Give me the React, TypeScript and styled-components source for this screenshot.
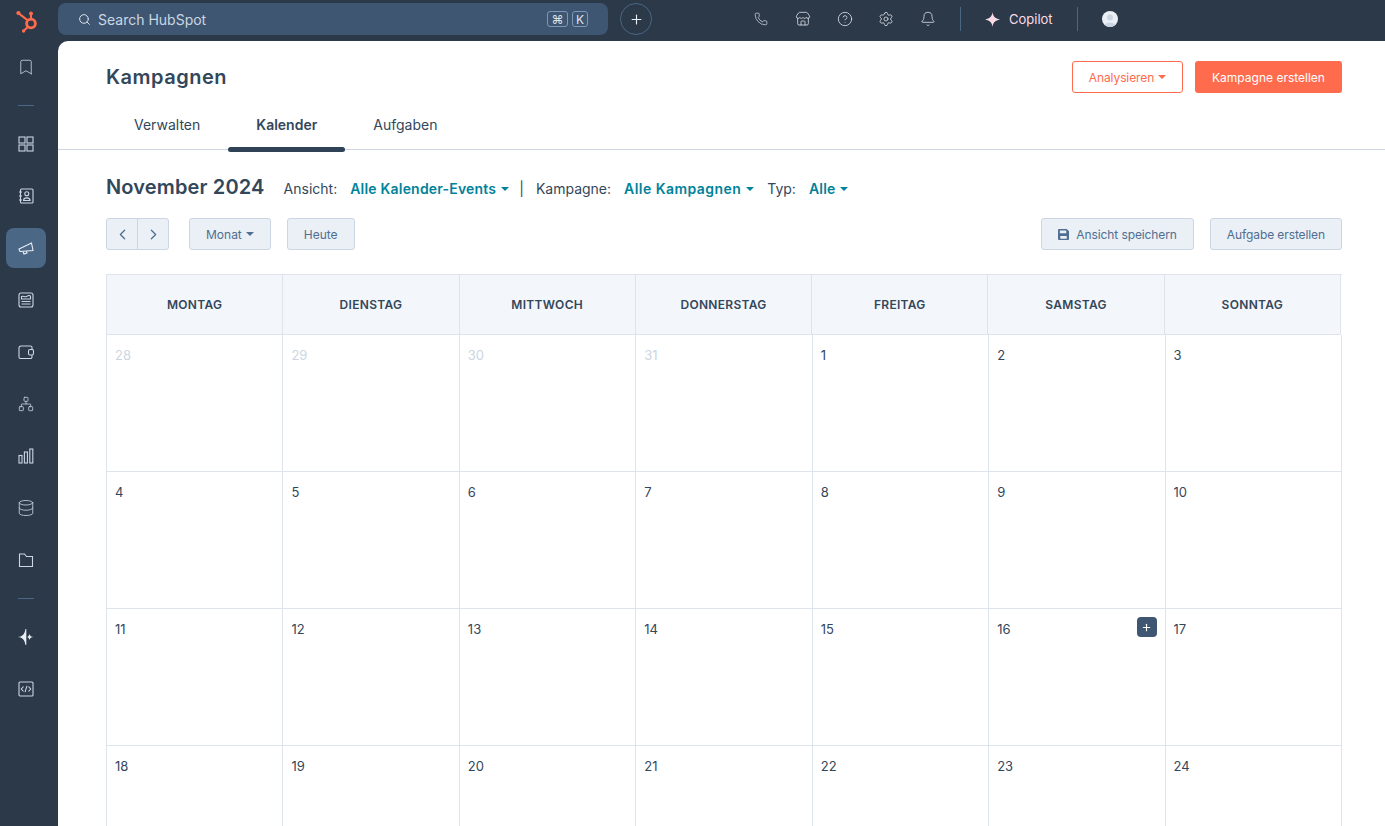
import React from 'react';
import styled, { createGlobalStyle } from 'styled-components';
import {
  Bell, Bookmark, ChevronLeft, ChevronRight, CircleHelp, Database,
  Network, Phone, Plus, Search, Settings, Store,
} from 'lucide-react';

const DAYS = ['MONTAG', 'DIENSTAG', 'MITTWOCH', 'DONNERSTAG', 'FREITAG', 'SAMSTAG', 'SONNTAG'];
const CELLS = [
  [28, true], [29, true], [30, true], [31, true], [1], [2], [3],
  [4], [5], [6], [7], [8], [9], [10],
  [11], [12], [13], [14], [15], [16], [17],
  [18], [19], [20], [21], [22], [23], [24],
] as [number, boolean?][];

function HubSpotLogo() {
  return (
    <svg width="26" height="26" viewBox="0 0 26 26" fill="none" stroke="#ff6b4d">
      <circle cx="17" cy="15.5" r="4.4" strokeWidth="2.8" />
      <path d="M17 11V6.5" strokeWidth="2" />
      <circle cx="17" cy="5.4" r="2" fill="#ff6b4d" stroke="none" />
      <path d="M13.8 12.4 5 5.6" strokeWidth="2" />
      <circle cx="4.4" cy="5" r="2.1" fill="#ff6b4d" stroke="none" />
      <path d="M13.8 19 10 22.6" strokeWidth="2" />
      <circle cx="9.6" cy="23" r="1.7" fill="#ff6b4d" stroke="none" />
    </svg>
  );
}

function Sparkle({ color, size }: { color: string; size: number }) {
  return (
    <svg width={size} height={size} viewBox="0 0 16 16" fill={color}>
      <path d="M8 0C8.500 4.600 10.600 7 16 8 10.600 9 8.500 11.400 8 16 7.500 11.400 5.400 9 0 8 5.400 7 7.500 4.600 8 0Z" />
    </svg>
  );
}

function Line({ children, size = 16 }: { children: React.ReactNode; size?: number }) {
  return (
    <svg width={size} height={size} viewBox="0 0 16 16" fill="none" stroke="currentColor" strokeWidth="1.1">
      {children}
    </svg>
  );
}

const GridIcon = () => (
  <Line>
    <rect x="1" y="1" width="6" height="6" />
    <rect x="9" y="1" width="6" height="6" />
    <rect x="1" y="9" width="6" height="6" />
    <rect x="9" y="9" width="6" height="6" />
  </Line>
);
const ContactsIcon = () => (
  <Line>
    <rect x="2.500" y="1" width="12.500" height="14" rx="1" />
    <path d="M1 4H4M1 8H4M1 12H4" />
    <circle cx="8.800" cy="5.800" r="2" />
    <path d="M5.500 12.500C5.800 9 11.800 9 12.100 12.500Z" />
  </Line>
);
const MegaphoneIcon = () => (
  <Line>
    <path d="M1 9 13.500 3 15 10.500 2 11.500Z" />
    <path d="M5 11.500 6 14 9 13 8.300 11.200" />
  </Line>
);
const ContentIcon = () => (
  <Line>
    <rect x="1" y="1" width="14" height="14" rx="2" />
    <path d="M3.500 7V4.500C6 3.500 6.500 5.500 8.500 4.500S12 3 12.500 4.500V7ZM3.500 9.500H12.500M3.500 12H12.500" />
  </Line>
);
const WalletIcon = () => (
  <Line>
    <path d="M14 5.500V3.500A1.500 1.500 0 0 0 12.500 2H3A2 2 0 0 0 1 4V13A1.500 1.500 0 0 0 2.500 14.500H12.500A1.500 1.500 0 0 0 14 13V11" />
    <rect x="10.500" y="5.500" width="5" height="5.500" rx="1.500" />
  </Line>
);
const BarsIcon = () => (
  <Line>
    <rect x="1" y="7.500" width="3" height="7.500" />
    <rect x="6.400" y="4" width="3" height="11" />
    <rect x="11.800" y="1" width="3" height="14" />
  </Line>
);
const FolderIcon = () => (
  <Line>
    <path d="M1.500 14.500V2H6.500L8.500 4.500H14.500V14.500Z" />
  </Line>
);
const AiIcon = () => (
  <svg width="16" height="16" viewBox="0 0 16 16" fill="#eaf0f6">
    <path d="M0 8C4 7.500 6.500 6 7.500 0H8.300V16H7.500C6.500 10 4 8.500 0 8Z" />
    <path d="M9 8C10 7.700 11 7 11.500 5 12 7 13 7.700 15.500 8 13 8.300 12 9 11.500 11 11 9 10 8.300 9 8Z" />
  </svg>
);
const CodeIcon = () => (
  <Line>
    <rect x="1" y="1" width="14" height="14" rx="1" />
    <path d="M5.500 5.500 3.300 8 5.500 10.500M10.500 5.500 12.700 8 10.500 10.500M9 4.800 7 11.200" />
  </Line>
);
const SaveIcon = () => (
  <svg width="11" height="11" viewBox="0 0 12 12" fill="#506e91">
    <path fillRule="evenodd" d="M1 0H9.500L12 2.500V11A1 1 0 0 1 11 12H1A1 1 0 0 1 0 11V1A1 1 0 0 1 1 0ZM2 1.500V4.500H9V1.500ZM2.500 7.500V10.500H9.500V7.500Z" />
  </svg>
);
const Avatar = () => (
  <svg width="16" height="16" viewBox="0 0 16 16">
    <circle cx="8" cy="8" r="8" fill="#eaf0f6" />
    <circle cx="8" cy="6.500" r="3" fill="#cbd6e2" />
    <path d="M2.800 14C4 10.500 12 10.500 13.200 14 10 16.600 6 16.600 2.800 14Z" fill="#cbd6e2" />
  </svg>
);

export default function App() {
  return (
    <Shell>
      <GlobalStyle />
      <Sidebar>
        <LogoSlot><HubSpotLogo /></LogoSlot>
        <NavItem><Bookmark size={18} strokeWidth={1.1} /></NavItem>
        <NavDivider />
        <NavItem><GridIcon /></NavItem>
        <NavItem><ContactsIcon /></NavItem>
        <NavItem active><MegaphoneIcon /></NavItem>
        <NavItem><ContentIcon /></NavItem>
        <NavItem><WalletIcon /></NavItem>
        <NavItem><Network size={16} strokeWidth={1.2} /></NavItem>
        <NavItem><BarsIcon /></NavItem>
        <NavItem><Database size={18} strokeWidth={1.1} /></NavItem>
        <NavItem><FolderIcon /></NavItem>
        <NavDivider />
        <NavItem><AiIcon /></NavItem>
        <NavItem><CodeIcon /></NavItem>
      </Sidebar>
      <Column>
        <TopBar>
          <SearchBox>
            <Search size={13} strokeWidth={1.8} color="#dfe3eb" />
            <SearchLabel>Search HubSpot</SearchLabel>
            <Keys>
              <Key>⌘</Key>
              <Key>K</Key>
            </Keys>
          </SearchBox>
          <AddButton><Plus size={15} strokeWidth={1.8} /></AddButton>
          <TopIcons>
            <TopIcon><Phone size={14} strokeWidth={1.2} /></TopIcon>
            <TopIcon><Store size={16} strokeWidth={1.2} /></TopIcon>
            <TopIcon><CircleHelp size={16} strokeWidth={1.2} /></TopIcon>
            <TopIcon><Settings size={16} strokeWidth={1.2} /></TopIcon>
            <TopIcon><Bell size={16} strokeWidth={1.2} /></TopIcon>
          </TopIcons>
          <TopSeparator />
          <Copilot>
            <Sparkle color="#fbdbe6" size={15} />
            <span>Copilot</span>
          </Copilot>
          <TopSeparator />
          <AvatarSlot><Avatar /></AvatarSlot>
        </TopBar>
        <Panel>
          <PageHeader>
            <PageTitle>Kampagnen</PageTitle>
            <HeaderActions>
              <OutlineButton>Analysieren<Caret /></OutlineButton>
              <PrimaryButton>Kampagne erstellen</PrimaryButton>
            </HeaderActions>
          </PageHeader>
          <Tabs>
            <Tab>Verwalten</Tab>
            <Tab active>Kalender</Tab>
            <Tab>Aufgaben</Tab>
          </Tabs>
          <Content>
            <FilterRow>
              <MonthTitle>November 2024</MonthTitle>
              <FilterLabel>Ansicht:</FilterLabel>
              <FilterLink>Alle Kalender-Events<Caret /></FilterLink>
              <FilterPipe>|</FilterPipe>
              <FilterLabel>Kampagne:</FilterLabel>
              <FilterLink wide>Alle Kampagnen<Caret /></FilterLink>
              <FilterLabel>Typ:</FilterLabel>
              <FilterLink>Alle<Caret /></FilterLink>
            </FilterRow>
            <Toolbar>
              <ArrowGroup>
                <ArrowButton><ChevronLeft size={17} strokeWidth={1.8} /></ArrowButton>
                <ArrowButton><ChevronRight size={17} strokeWidth={1.8} /></ArrowButton>
              </ArrowGroup>
              <GreyButton>Monat<Caret /></GreyButton>
              <GreyButton>Heute</GreyButton>
              <ToolbarRight>
                <GreyButton><SaveIcon />Ansicht speichern</GreyButton>
                <GreyButton>Aufgabe erstellen</GreyButton>
              </ToolbarRight>
            </Toolbar>
            <Calendar>
              <HeaderRow>
                {DAYS.map(day => <DayHead key={day}>{day}</DayHead>)}
              </HeaderRow>
              <Weeks>
                {CELLS.map(([num, muted]) => (
                  <DayCell key={`${num}-${muted ? 'prev' : 'cur'}`}>
                    <DayNumber muted={muted}>{num}</DayNumber>
                    {num === 16 && !muted && <CellAdd><Plus size={11} strokeWidth={2.4} /></CellAdd>}
                  </DayCell>
                ))}
              </Weeks>
            </Calendar>
          </Content>
        </Panel>
      </Column>
    </Shell>
  );
}

const GlobalStyle = createGlobalStyle`
  html, body {
    margin: 0;
    height: 100%;
    overflow: hidden;
    background: #2b3949;
    font-family: Inter, "Liberation Sans", sans-serif;
    color: #33475b;
  }
`;
const Shell = styled.div`
  display: flex;
  width: 1385px;
  height: 826px;
  overflow: hidden;
  background: #2b3949;
`;
const Sidebar = styled.nav`
  display: flex;
  flex-direction: column;
  gap: 12px;
  flex: 0 0 58px;
  box-sizing: border-box;
  padding-left: 6px;
`;
const LogoSlot = styled.div`
  display: flex;
  align-items: center;
  justify-content: center;
  width: 40px;
  height: 35px;
  padding-top: 3px;
  margin-left: 1px;
  margin-bottom: -3px;
`;
const NavItem = styled.div<{ active?: boolean }>`
  display: flex;
  align-items: center;
  justify-content: center;
  flex: 0 0 40px;
  width: 40px;
  border-radius: 8px;
  color: ${props => (props.active ? '#eaf0f6' : '#cbd6e2')};
  background: ${props => (props.active ? '#4a6785' : 'transparent')};
`;
const NavDivider = styled.div`
  width: 16px;
  height: 1px;
  margin: 6px 12px;
  background: #4a6785;
`;
const Column = styled.div`
  display: flex;
  flex-direction: column;
  flex: 1;
  min-width: 0;
`;
const TopBar = styled.header`
  display: flex;
  align-items: center;
  flex: 0 0 41px;
  box-sizing: border-box;
  padding-bottom: 3px;
  color: #dfe3eb;
`;
const SearchBox = styled.div`
  display: flex;
  align-items: center;
  width: 550px;
  height: 32px;
  box-sizing: border-box;
  padding: 0 20px;
  border-radius: 8px;
  background: #3e5672;
`;
const SearchLabel = styled.span`
  margin-left: 7px;
  font-size: 14px;
  color: #cbd6e2;
`;
const Keys = styled.div`
  display: flex;
  gap: 4px;
  margin-left: auto;
`;
const Key = styled.span`
  display: flex;
  align-items: center;
  justify-content: center;
  min-width: 14px;
  height: 14px;
  padding: 0;
  border: 1px solid #7c98b6;
  border-radius: 3px;
  font-size: 12px;
  color: #dfe3eb;
  &:first-child {
    min-width: 19px;
  }
`;
const AddButton = styled.div`
  display: flex;
  align-items: center;
  justify-content: center;
  width: 30px;
  height: 30px;
  margin-left: 12px;
  border: 1px solid #4a6785;
  border-radius: 50%;
  color: #eaf0f6;
`;
const TopIcons = styled.div`
  display: flex;
  gap: 12px;
  margin-left: 94px;
`;
const TopIcon = styled.div`
  display: flex;
  align-items: center;
  justify-content: center;
  width: 30px;
  height: 30px;
  color: #dfe3eb;
  & + & {
    margin-left: -0.250px;
  }
`;
const TopSeparator = styled.div`
  width: 1px;
  height: 24px;
  margin-left: 17px;
  background: #4a6785;
`;
const Copilot = styled.div`
  display: flex;
  align-items: center;
  gap: 9px;
  margin-left: 24px;
  margin-right: 7px;
  font-size: 13px;
  color: #fbdbe6;
`;
const AvatarSlot = styled.div`
  display: flex;
  margin-left: 24px;
`;
const Panel = styled.main`
  flex: 1;
  border-top-left-radius: 10px;
  background: #fff;
  overflow: hidden;
`;
const PageHeader = styled.div`
  display: flex;
  align-items: flex-start;
  justify-content: space-between;
  padding: 20px 43px 0 48px;
`;
const PageTitle = styled.h1`
  margin: 4px 0 0;
  font-size: 20px;
  line-height: 24px;
  font-weight: 600;
  letter-spacing: 0.5px;
`;
const HeaderActions = styled.div`
  display: flex;
  gap: 12px;
`;
const OutlineButton = styled.button`
  display: flex;
  align-items: center;
  justify-content: center;
  gap: 4px;
  width: 111px;
  height: 32px;
  padding: 0;
  border: 1px solid #ff6b4d;
  border-radius: 3px;
  background: #fff;
  font: 400 12px Inter, sans-serif;
  letter-spacing: -0.1px;
  color: #ff6b4d;
`;
const PrimaryButton = styled.button`
  width: 147px;
  height: 32px;
  padding: 0;
  border: 0;
  border-radius: 3px;
  background: #ff6b4d;
  font: 400 12px Inter, sans-serif;
  color: #fff;
`;
const Tabs = styled.div`
  display: flex;
  margin-top: 7px;
  padding-left: 48px;
  border-bottom: 1px solid #cbd6e2;
  box-sizing: border-box;
  height: 50px;
`;
const Tab = styled.div<{ active?: boolean }>`
  position: relative;
  display: flex;
  align-items: flex-start;
  padding: 15px 28px 0;
  height: 50px;
  box-sizing: border-box;
  font-size: 14px;
  line-height: 20px;
  font-weight: ${props => (props.active ? 600 : 400)};
  &::after {
    content: '';
    display: ${props => (props.active ? 'block' : 'none')};
    position: absolute;
    left: 0;
    right: 0;
    bottom: -2px;
    height: 5px;
    border-radius: 3px;
    background: #2f4256;
  }
`;
const Content = styled.div`
  padding: 23px 43px 0 48px;
`;
const FilterRow = styled.div`
  display: flex;
  align-items: center;
  height: 28px;
  font-size: 14px;
`;
const MonthTitle = styled.h2`
  margin: 0 19px 0 0;
  font-size: 20px;
  line-height: 28px;
  font-weight: 600;
  letter-spacing: 0.15px;
`;
const FilterLabel = styled.span`
  margin-right: 13px;
  padding-top: 3px;
`;
const FilterLink = styled.span<{ wide?: boolean }>`
  display: flex;
  align-items: center;
  gap: 5px;
  margin-right: 13px;
  padding-top: 3px;
  font-weight: 600;
  letter-spacing: ${props => (props.wide ? '0.45px' : '0.2px')};
  color: #00829b;
`;
const FilterPipe = styled.span`
  margin: 0 12px 0 -3px;
  padding-top: 3px;
`;
const Caret = styled.i`
  display: inline-block;
  width: 0;
  height: 0;
  border-left: 4px solid transparent;
  border-right: 4px solid transparent;
  border-top: 4px solid currentColor;
`;
const Toolbar = styled.div`
  display: flex;
  align-items: center;
  gap: 16px;
  margin-top: 17px;
`;
const ToolbarRight = styled.div`
  display: flex;
  gap: 16px;
  margin-left: auto;
  letter-spacing: -0.1px;
  & > button {
    letter-spacing: -0.1px;
  }
`;
const ArrowGroup = styled.div`
  display: flex;
  height: 32px;
  margin-right: 4px;
  border: 1px solid #cbd6e2;
  border-radius: 3px;
  box-sizing: border-box;
  background: #eaf0f6;
  overflow: hidden;
`;
const ArrowButton = styled.div`
  display: flex;
  align-items: center;
  justify-content: center;
  width: 30px;
  color: #506e91;
  & + & {
    border-left: 1px solid #cbd6e2;
  }
`;
const GreyButton = styled.button`
  display: flex;
  align-items: center;
  gap: 4px;
  height: 32px;
  padding: 0 16px;
  border: 1px solid #cbd6e2;
  border-radius: 3px;
  background: #eaf0f6;
  font: 400 12px Inter, sans-serif;
  color: #506e91;
  & > svg {
    margin-right: 3px;
  }
`;
const Calendar = styled.section`
  margin-top: 24px;
  border-left: 1px solid #dfe3eb;
  border-top: 1px solid #dfe3eb;
`;
const HeaderRow = styled.div`
  display: grid;
  grid-template-columns: repeat(7, 1fr);
  height: 60px;
  box-sizing: border-box;
  margin-right: 1px;
`;
const DayHead = styled.div`
  display: flex;
  align-items: center;
  justify-content: center;
  border-right: 1px solid #dfe3eb;
  border-bottom: 1px solid #dfe3eb;
  background: #f3f6fa;
  font-size: 12px;
  font-weight: 600;
  letter-spacing: 0.3px;
`;
const Weeks = styled.div`
  display: grid;
  grid-template-columns: repeat(7, 1fr);
  grid-auto-rows: 137px;
`;
const DayCell = styled.div`
  position: relative;
  box-sizing: border-box;
  padding: 9px 8px;
  border-right: 1px solid #dfe3eb;
  border-bottom: 1px solid #dfe3eb;
`;
const DayNumber = styled.span<{ muted?: boolean }>`
  font-size: 13px;
  line-height: 20px;
  color: ${props => (props.muted ? '#cbd6e2' : '#33475b')};
`;
const CellAdd = styled.div`
  position: absolute;
  top: 8px;
  right: 8px;
  display: flex;
  align-items: center;
  justify-content: center;
  width: 20px;
  height: 20px;
  border-radius: 4px;
  background: #3e5672;
  color: #fff;
`;
